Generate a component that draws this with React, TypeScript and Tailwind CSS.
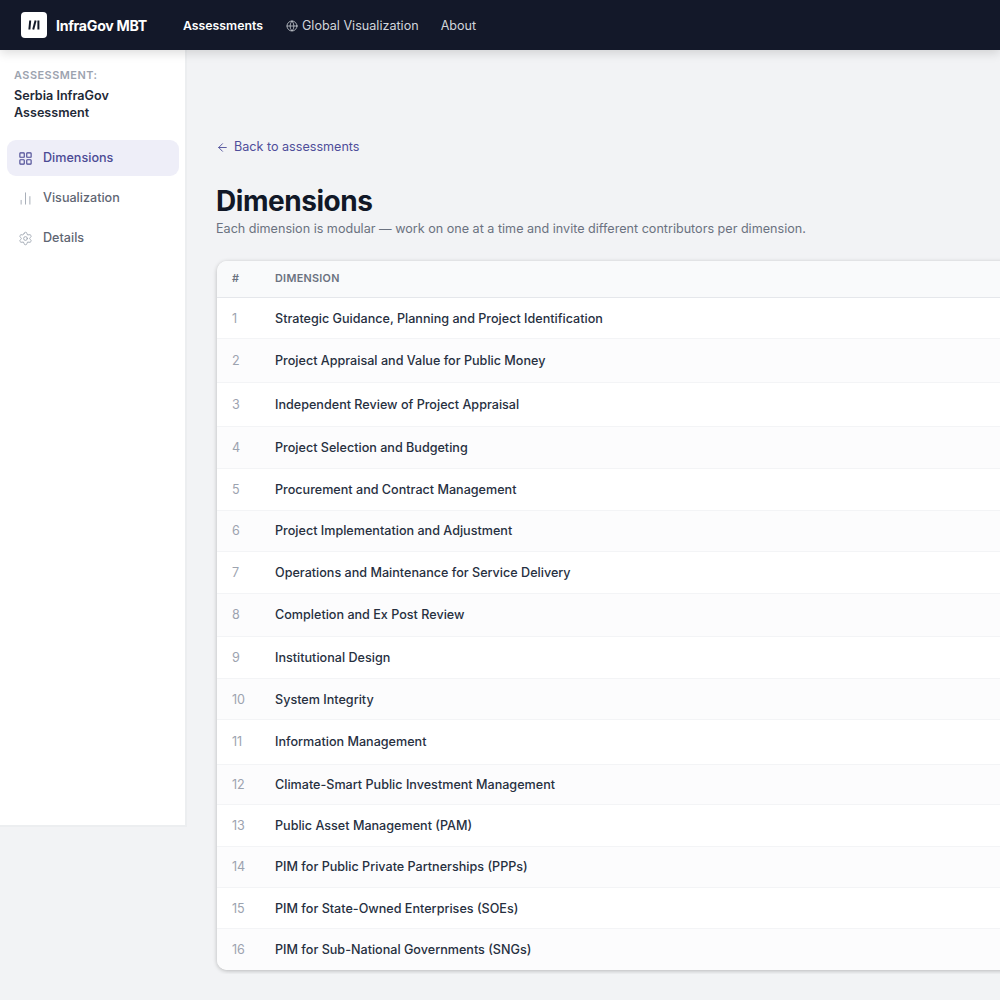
import React from "react";
import { ArrowLeft, BarChart2, Globe, LayoutGrid, Settings } from "lucide-react";

const rows = [
  { name: "Strategic Guidance, Planning and Project Identification", h: "h-[41px] pt-[2px]" },
  { name: "Project Appraisal and Value for Public Money", h: "h-[44px] pt-[2px]" },
  { name: "Independent Review of Project Appraisal", h: "h-[44px] pt-[2px]" },
  { name: "Project Selection and Budgeting", h: "h-[42px] pt-[2px]" },
  { name: "Procurement and Contract Management", h: "h-[42px] pt-[2px]" },
  { name: "Project Implementation and Adjustment", h: "h-[41px] pt-0" },
  { name: "Operations and Maintenance for Service Delivery", h: "h-[42px] pt-[2px]" },
  { name: "Completion and Ex Post Review", h: "h-[43px] pt-0" },
  { name: "Institutional Design", h: "h-[42px] pt-[2px]" },
  { name: "System Integrity", h: "h-[41px] pt-[2px]" },
  { name: "Information Management", h: "h-[45px] pt-0" },
  { name: "Climate-Smart Public Investment Management", h: "h-[40px] pt-[2px]" },
  { name: "Public Asset Management (PAM)", h: "h-[42px] pt-[2px]" },
  { name: "PIM for Public Private Partnerships (PPPs)", h: "h-[41px] pt-0" },
  { name: "PIM for State-Owned Enterprises (SOEs)", h: "h-[41px] pt-[2px]" },
  { name: "PIM for Sub-National Governments (SNGs)", h: "h-[41px] pt-[2px]" },
];

function Logo() {
  return (
    <div className="flex h-[26px] w-[26px] items-center justify-center rounded-[4px] bg-white">
      <svg width="14" height="12" viewBox="0 0 14 12" fill="none" stroke="#111827" strokeWidth="2">
        <path d="M3.2 1.5 2.4 10.5" />
        <path d="M8.6 1.5 6.2 10.5" />
        <path d="M11.4 1.5v9" />
      </svg>
    </div>
  );
}

export default function App() {
  return (
    <div className="min-h-[1000px] bg-[#f2f3f5] font-['Inter',sans-serif]">
      <header className="relative flex h-[50px] items-center bg-[#131829] pl-[21px] shadow-[0_3px_10px_rgba(0,0,0,0.14)]">
        <Logo />
        <span className="ml-[9px] pt-[2px] text-[14.2px] font-bold tracking-[-0.3px] text-white">InfraGov MBT</span>
        <nav className="ml-[36px] flex items-center pt-[2px] text-[12.6px]">
          <span className="text-[12.3px] font-semibold text-white">Assessments</span>
          <Globe className="ml-[23px] h-[12px] w-[12px] text-[#d1d5db]" strokeWidth={1.5} />
          <span className="ml-[4px] text-[#d1d5db]">Global Visualization</span>
          <span className="ml-[22px] text-[#d1d5db]">About</span>
        </nav>
      </header>

      <div className="flex items-start">
        <aside className="h-[777px] w-[187px] shrink-0 border-r-2 border-b-2 border-[#eceef0] bg-white">
          <div className="px-[14px] pt-[19px]">
            <div className="text-[10.9px] leading-[13px] font-semibold tracking-[0.5px] text-[#9ca3af]">ASSESSMENT:</div>
            <div className="mt-[5px] text-[12.6px] leading-[17px] font-semibold text-[#1f2937]">
              Serbia InfraGov
              <br />
              Assessment
            </div>
          </div>
          <div className="mt-[19px] flex flex-col gap-[4px] px-[7px] text-[12.6px]">
            <div className="flex h-[36px] w-[172px] items-center gap-[10px] rounded-[9px] bg-[#eeeef8] pl-[11px] font-medium text-[#4b4a94]">
              <LayoutGrid className="h-[15px] w-[15px]" strokeWidth={1.8} />
              Dimensions
            </div>
            <div className="flex h-[36px] items-center gap-[10px] pl-[11px] font-medium text-[#5f6673]">
              <BarChart2 className="h-[15px] w-[15px] text-[#9ca3af]" strokeWidth={1.4} />
              Visualization
            </div>
            <div className="flex h-[36px] items-center gap-[10px] pl-[11px] font-medium text-[#5f6673]">
              <Settings className="h-[15px] w-[15px] text-[#9ca3af]" strokeWidth={1.4} />
              Details
            </div>
          </div>
        </aside>

        <main className="min-w-0 flex-1 overflow-hidden pl-[29px] pt-[88px]">
          <div className="flex h-[18px] items-center text-[12.6px] text-[#4f4e9a]">
            <ArrowLeft className="mr-[5px] h-[13px] w-[13px]" strokeWidth={1.7} />
            Back to assessments
          </div>
          <h1 className="mt-[27px] text-[28px] leading-[36px] font-bold tracking-[-0.45px] text-[#111827]">Dimensions</h1>
          <p className="mt-[1px] text-[12.6px] leading-[18px] text-[#6b7280]">
            Each dimension is modular — work on one at a time and invite different contributors per dimension.
          </p>

          <div className="mt-[23px] mb-[4px] ml-[1px] w-[900px] overflow-hidden rounded-[10px] bg-white shadow-[0_1px_4px_rgba(0,0,0,0.25)]">
            <div className="flex h-[37px] items-center border-b border-[#e5e7eb] bg-[#f9fafb] text-[10.8px] font-semibold text-[#6b7280]">
              <span className="w-[58px] pl-[15px]">#</span>
              <span className="tracking-[0.3px]">DIMENSION</span>
            </div>
            {rows.map((row, i) => (
              <div
                key={row.name}
                className={`flex items-center border-b border-[#f3f4f6] last:border-b-0 ${row.h} ${i % 2 === 1 ? "bg-[#fcfcfd]" : "bg-white"}`}
              >
                <span className="w-[58px] pl-[15px] text-[12.6px] text-[#9ca3af]">{i + 1}</span>
                <span className="text-[12.6px] font-medium text-[#27303f]">{row.name}</span>
              </div>
            ))}
          </div>
        </main>
      </div>
    </div>
  );
}
